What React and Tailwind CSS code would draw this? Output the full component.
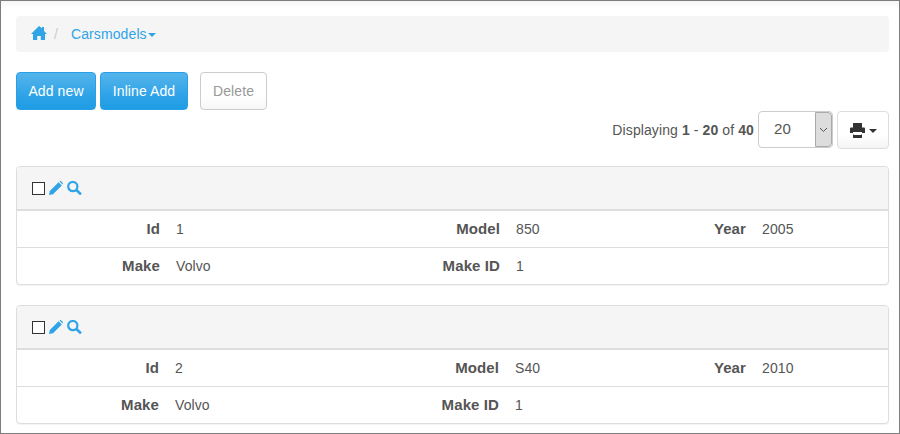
import React from "react";

const primaryBtn =
  "h-[38px] rounded border border-[#2a9fe6] bg-gradient-to-b from-[#54b4eb] via-[#2fa4e7] via-60% to-[#1d9ce5] text-white text-[14px] text-center";

function Caret({ color = "border-t-[#2fa4e7]" }) {
  return <span className={`block w-0 h-0 border-x-4 border-x-transparent border-t-4 ${color}`} />;
}

function HomeIcon() {
  return (
    <svg width="16" height="14" viewBox="0 0 16 14" className="text-[#2fa4e7] -mt-[2px]">
      <path fill="currentColor" d="M8 0L0 8h2v6h4.2v-4h3.6v4H14V8h2l-3-3V1h-2v1.2z" />
    </svg>
  );
}

function PencilIcon() {
  return (
    <svg width="14" height="14" viewBox="0 0 14 14" className="text-[#2fa4e7] mr-[4px]">
      <path fill="currentColor" d="M0 14l.8-4L9.6 1.2l3.2 3.2L4 13.2zM10.6.4l.6-.4h.6l2 2v.8l-.4.6z" />
    </svg>
  );
}

function SearchIcon() {
  return (
    <svg width="15" height="14" viewBox="0 0 15 14" className="text-[#2fa4e7]">
      <circle cx="5.8" cy="5.6" r="4.6" fill="none" stroke="currentColor" strokeWidth="2.2" />
      <path d="M9.4 9l4.6 4.4" fill="none" stroke="currentColor" strokeWidth="2.6" />
    </svg>
  );
}

function PrintIcon() {
  return (
    <svg width="15" height="15" viewBox="0 0 15 15">
      <path fill="#333" d="M3 0h9v4.5H3zM1 4.5h13a1 1 0 0 1 1 1V10h-3V9H3v1H0V5.5a1 1 0 0 1 1-1zM3 11h9v4H3z" />
      <path fill="#fff" d="M3.5 10h8v2h-8z" />
    </svg>
  );
}

function Field({ label, value }) {
  return (
    <>
      <div className="pr-4 text-right font-bold text-[15px]">{label}</div>
      <div>{value}</div>
    </>
  );
}

function Row({ cols, border, cells }) {
  return (
    <div className={`grid items-center ${cols} ${border ? "border-t border-[#ddd] h-[37px]" : "h-[36px]"}`}>
      {cells.map((c, i) => (
        <Field key={i} label={c[0]} value={c[1]} />
      ))}
    </div>
  );
}

function RecordCard({ cols, first, second }) {
  return (
    <div className="rounded border border-[#ddd] bg-white overflow-hidden shadow-[0_1px_1px_rgba(0,0,0,0.05)]">
      <div className="h-[44px] bg-[#f5f5f5] border-b-2 border-[#ddd] flex items-center pl-[15px]">
        <span className="w-[13px] h-[13px] border border-[#333] bg-white mr-[4px]" />
        <PencilIcon />
        <SearchIcon />
      </div>
      <Row cols={cols} cells={first} />
      <Row cols={cols} border cells={second} />
    </div>
  );
}

export default function App() {
  const cols1 = "grid-cols-[159px_170px_170px_123px_123px_1fr]";
  const cols2 = "grid-cols-[158px_170px_170px_124px_123px_1fr]";

  return (
    <div
      className="w-[900px] h-[434px] overflow-hidden bg-white text-[#555] text-[14px] tracking-[0.1px] border border-[#7d7d7d] px-[15px] pt-[15px] shadow-[inset_0_7px_7px_-5px_rgba(0,0,0,0.06)]"
      style={{ fontFamily: '"Liberation Sans", Arial, sans-serif' }}
    >
      {/* breadcrumb */}
      <div className="h-[36px] w-[873px] rounded bg-[#f5f5f5] flex items-center pl-[15px] text-[#2fa4e7]">
        <HomeIcon />
        <span className="text-[#ccc] ml-[7px] mr-[13px]">/</span>
        <span>Carsmodels</span>
        <span className="ml-[1px] mt-[1px]"><Caret /></span>
      </div>

      {/* actions */}
      <div className="flex mt-[20px]">
        <button className={`${primaryBtn} w-[80px]`}>Add new</button>
        <button className={`${primaryBtn} w-[88px] ml-[4px]`}>Inline Add</button>
        <button className="w-[67px] h-[38px] ml-[12px] rounded border border-[#ccc] bg-gradient-to-b from-white via-white via-60% to-[#f7f7f7] text-[#999] text-center">
          Delete
        </button>
      </div>

      {/* paging */}
      <div className="flex justify-end items-start w-[873px] mt-[1px]">
        <span className="mr-[4px] mt-[9px]">
          Displaying <b>1</b> - <b>20</b> of <b>40</b>
        </span>
        <div className="w-[75px] h-[37px] rounded border border-[#ccc] flex overflow-hidden">
          <div className="flex-1 flex items-center pl-[15px] text-[15px]">20</div>
          <div className="w-[17px] bg-[#ddd] border border-[#aaa] rounded-r flex items-center justify-center">
            <svg width="9" height="6" viewBox="0 0 9 6">
              <path d="M1 1l3.5 3.5L8 1" fill="none" stroke="#555" strokeWidth="1" />
            </svg>
          </div>
        </div>
        <div className="w-[52px] h-[38px] ml-[4px] rounded border border-[#ddd] bg-gradient-to-b from-white via-white via-60% to-[#f5f5f5] flex items-center justify-center gap-[4px]">
          <PrintIcon />
          <span className="mt-[2px]"><Caret color="border-t-[#333]" /></span>
        </div>
      </div>

      {/* records */}
      <div className="w-[873px] mt-[17px] flex flex-col gap-[20px]">
        <RecordCard
          cols={cols1}
          first={[["Id", "1"], ["Model", "850"], ["Year", "2005"]]}
          second={[["Make", "Volvo"], ["Make ID", "1"]]}
        />
        <RecordCard
          cols={cols2}
          first={[["Id", "2"], ["Model", "S40"], ["Year", "2010"]]}
          second={[["Make", "Volvo"], ["Make ID", "1"]]}
        />
      </div>
    </div>
  );
}
